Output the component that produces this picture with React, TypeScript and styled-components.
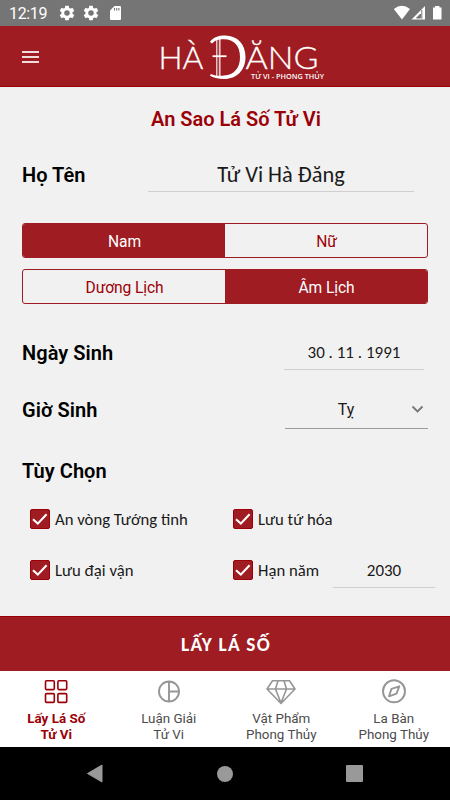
import React from 'react';
import styled, { createGlobalStyle } from 'styled-components';

const RED = '#9e1c22';
const DEEP = '#9b0007';

const GlobalStyle = createGlobalStyle`
  * { box-sizing: border-box; }
  body { margin: 0; background: #f1f1f1; font-family: Roboto, "Liberation Sans", sans-serif; }
`;

const Screen = styled.div`
  width: 450px;
  height: 800px;
  display: flex;
  flex-direction: column;
  overflow: hidden;
  background: #f1f1f1;
`;

const StatusBar = styled.div`
  height: 26px;
  flex: none;
  display: flex;
  align-items: center;
  padding: 0 8px 0 9px;
  background: #757575;
  color: #fff;
`;

const Clock = styled.span`
  width: 46px;
  font-size: 16px;
  letter-spacing: -0.35px;
  line-height: 26px;
  padding-top: 2px;
`;

const StatusIcons = styled.div<{ $right?: boolean }>`
  display: flex;
  align-items: center;
  margin-left: ${(p) => (p.$right ? 'auto' : '0')};
  svg { display: block; }
`;

const Header = styled.header`
  height: 61px;
  flex: none;
  display: flex;
  align-items: center;
  background: ${RED};
  border-bottom: 1px solid ${DEEP};
`;

const MenuButton = styled.button`
  width: 17px;
  height: 12px;
  margin: 1px 0 0 22px;
  padding: 0;
  border: 0;
  background: none;
  display: flex;
  flex-direction: column;
  justify-content: space-between;
`;

const MenuLine = styled.span`
  height: 2px;
  background: #f0dcdd;
`;

const Logo = styled.svg`
  display: block;
  margin-left: 111px;
`;

const Form = styled.main`
  height: 529px;
  flex: none;
  display: flex;
  flex-direction: column;
  padding: 0 22px;
`;

const Title = styled.h1`
  margin: 18px 0 0 22px;
  text-align: center;
  font-size: 20px;
  line-height: 28px;
  font-weight: 600;
  color: ${DEEP};
`;

const Row = styled.div<{ $top: number }>`
  height: 36px;
  flex: none;
  margin-top: ${(p) => p.$top}px;
  display: flex;
  align-items: center;
  justify-content: space-between;
`;

const Label = styled.h2<{ $drop?: boolean }>`
  margin: 0;
  padding-top: ${(p) => (p.$drop ? 2 : 0)}px;
  font-size: 20px;
  line-height: 28px;
  font-weight: 600;
  letter-spacing: 0.05px;
  color: #000;
`;

const Field = styled.div<{ $width: number; $right?: number; $size?: number; $line?: string }>`
  width: ${(p) => p.$width}px;
  height: 36px;
  flex: none;
  margin-right: ${(p) => p.$right ?? 0}px;
  padding-top: 2px;
  border-bottom: 1px solid ${(p) => p.$line ?? '#cfcfcf'};
  display: flex;
  align-items: center;
  justify-content: center;
  font-family: Carlito, Lato, Roboto, sans-serif;
  font-size: ${(p) => p.$size ?? 17}px;
  color: #1a1a1a;
`;

const SelectField = styled(Field)`
  height: 37px;
  padding-top: 0;
  font-family: Roboto, sans-serif;
  font-size: 16px;
  display: grid;
  grid-template-columns: 1fr 21px;
  text-align: center;
  svg { display: block; }
`;

const Segmented = styled.div<{ $top: number }>`
  width: 406px;
  height: 35px;
  flex: none;
  margin-top: ${(p) => p.$top}px;
  display: grid;
  grid-template-columns: 1fr 1fr;
  border: 1px solid ${RED};
  border-radius: 3px;
  overflow: hidden;
`;

const Segment = styled.button<{ $active?: boolean }>`
  border: 0;
  padding: 2px 0 0 1px;
  font-family: Roboto, sans-serif;
  font-size: 15.6px;
  letter-spacing: -0.1px;
  color: ${(p) => (p.$active ? '#fff' : DEEP)};
  background: ${(p) => (p.$active ? RED : 'transparent')};
`;

const Options = styled.div`
  margin: 13px -22px 0 8px;
  display: grid;
  grid-template-columns: 203px 1fr;
  grid-template-rows: 36px 36px;
  row-gap: 15px;
`;

const Option = styled.div`
  display: flex;
  align-items: center;
  white-space: nowrap;
  font-family: Carlito, Lato, Roboto, sans-serif;
  font-size: 16.7px;
  color: #1a1a1a;
`;

const CheckBox = styled.span`
  width: 20px;
  height: 20px;
  margin-right: 5px;
  border-radius: 2px;
  background: ${RED};
  border: 1px solid ${DEEP};
  flex: none;
  svg { display: block; }
`;

const OptionText = styled.span<{ $width?: number }>`
  width: ${(p) => (p.$width ? `${p.$width}px` : 'auto')};
`;

const Submit = styled.button`
  height: 55px;
  flex: none;
  border: 0;
  padding: 1px 0 0 2px;
  border-top: 1px solid ${DEEP};
  background: ${RED};
  color: #fff;
  font-family: Carlito, Lato, Roboto, sans-serif;
  font-size: 19.3px;
  font-weight: 700;
  letter-spacing: 1.2px;
`;

const Tabs = styled.nav`
  height: 76px;
  flex: none;
  display: grid;
  grid-template-columns: repeat(4, 1fr);
  background: #fff;
`;

const Tab = styled.div<{ $active?: boolean }>`
  display: flex;
  flex-direction: column;
  align-items: center;
  text-align: center;
  padding-top: 5px;
  font-size: 13.4px;
  line-height: 16px;
  font-weight: ${(p) => (p.$active ? 700 : 400)};
  color: ${(p) => (p.$active ? DEEP : '#4c4c4c')};
  svg { display: block; margin-bottom: 4px; flex: none; }
`;

const SystemNav = styled.div`
  height: 53px;
  flex: none;
  background: #000;
  display: flex;
  justify-content: center;
  align-items: center;
  gap: 113px;
  svg { display: block; }
`;

const Gear = () => (
  <svg width="24" height="16" viewBox="-5 0 34 24">
    <path
      fill="#fff"
      transform="translate(-1.8 -1.8) scale(1.15)"
      d="M19.14 12.94c.04-.3.06-.61.06-.94s-.02-.64-.07-.94l2.03-1.58a.5.5 0 0 0 .12-.61l-1.92-3.32a.49.49 0 0 0-.59-.22l-2.39.96a7 7 0 0 0-1.62-.94l-.36-2.54A.48.48 0 0 0 13.92 2.4h-3.84a.47.47 0 0 0-.47.41l-.36 2.54c-.59.24-1.13.57-1.62.94l-2.39-.96a.47.47 0 0 0-.59.22L2.74 8.87a.47.47 0 0 0 .12.61l2.03 1.58a6 6 0 0 0-.02 1.88l-2.03 1.58a.5.5 0 0 0-.12.61l1.92 3.32c.12.22.37.29.59.22l2.39-.96c.5.38 1.03.7 1.62.94l.36 2.54c.05.24.24.41.48.41h3.84c.24 0 .44-.17.47-.41l.36-2.54a6.7 6.7 0 0 0 1.62-.94l2.39.96c.22.08.47 0 .59-.22l1.92-3.32a.47.47 0 0 0-.12-.61zM12 15.6a3.6 3.6 0 1 1 0-7.2 3.6 3.6 0 0 1 0 7.2z"
    />
  </svg>
);

const Check = () => (
  <svg width="18" height="18" viewBox="0 0 18 18">
    <path d="M2 9.3 L6.8 13.6 L15.6 4.2" fill="none" stroke="#fff" strokeWidth="2.1" />
  </svg>
);

const BrandLogo = () => (
  <Logo width="180" height="60" viewBox="150 26 180 60">
    <g fill="#fff" fontFamily="Lato, Carlito, sans-serif">
      <g stroke="#fff" strokeWidth="0.3" fontSize="32" fontWeight="300">
        <text x="158.500" y="69" textLength="45" lengthAdjust="spacingAndGlyphs">HÀ</text>
        <text x="245.500" y="69" textLength="73" lengthAdjust="spacingAndGlyphs">ĂNG</text>
      </g>
      <text x="251" y="79" fontSize="7.800" fontFamily="Open Sans" fontWeight="600" textLength="73" lengthAdjust="spacingAndGlyphs">TỬ VI - PHONG THỦY</text>
    </g>
    <path fill="#fff" d="M210 42 C213 37 219 35.500 225 35.500 C238 35.700 245.500 44.500 245.500 57 C245.500 70 237 79 224 79 C218 79 213 77.500 210 75.800 L210.800 74 C215 76 220 76 224 75.600 C234.500 74.800 240 68 240 57 C240 46 234 39.300 224 39.300 C218 39.300 215 40.500 212 43.500 Z" />
    <path fill="none" stroke="#fff" strokeWidth="1.2" strokeOpacity="0.9" d="M216.800 40V76" />
    <path fill="none" stroke="#fff" strokeWidth="1.8" strokeOpacity="0.75" d="M219.700 39V76" />
    <path fill="none" stroke="#fff" strokeWidth="1.8" d="M212.500 56.200H226.500" />
  </Logo>
);

const tabs = [
  {
    lines: ['Lấy Lá Số', 'Tử Vi'],
    active: true,
    icon: (
      <g stroke={DEEP} strokeWidth="1.6" fill="none">
        <rect x="5.500" y="4.800" width="8.800" height="8.800" rx="1" />
        <rect x="17.900" y="4.800" width="8.800" height="8.800" rx="1" />
        <rect x="5.500" y="17.600" width="8.800" height="8.800" rx="1" />
        <rect x="17.900" y="17.600" width="8.800" height="8.800" rx="1" />
      </g>
    ),
  },
  {
    lines: ['Luận Giải', 'Tử Vi'],
    icon: (
      <g stroke="#969696" strokeWidth="1.9" fill="none">
        <circle cx="16" cy="15.500" r="10" />
        <path d="M16 5.500V25.500M16 15.500H26" />
      </g>
    ),
  },
  {
    lines: ['Vật Phẩm', 'Phong Thủy'],
    icon: (
      <g stroke="#969696" strokeWidth="1.6" fill="none" strokeLinejoin="round">
        <path d="M7.500 4.800H24.500L30 13L16 27.500L2 13Z M2 13H30M13 4.800L10.500 13L16 27L21.500 13L19 4.800" />
      </g>
    ),
  },
  {
    lines: ['La Bàn', 'Phong Thủy'],
    icon: (
      <g stroke="#969696" strokeWidth="1.9" fill="none" strokeLinejoin="round">
        <circle cx="16" cy="15.300" r="11" />
        <path d="M21.300 10.300L18.500 17.700L11 20.300L13.500 12.800Z" />
      </g>
    ),
  },
];

export default function App() {
  return (
    <>
      <GlobalStyle />
      <Screen>
        <StatusBar>
          <Clock>12:19</Clock>
          <StatusIcons>
            <Gear />
            <Gear />
            <svg width="20" height="16" viewBox="-5 0 20 16">
              <path d="M6.500 1H12a1 1 0 0 1 1 1V14a1 1 0 0 1-1 1H3a1 1 0 0 1-1-1V5.500Z" fill="#fff" />
              <path d="M6.500 3V5.500M8.700 3V5.500M10.900 3V5.500" stroke="#757575" strokeWidth="1.100" />
            </svg>
          </StatusIcons>
          <StatusIcons $right>
            <svg width="50" height="16" viewBox="392 5 50 16">
              <path d="M393.800 9 Q402 2.500 410 9 L402 19.500Z" fill="#fff" />
              <path d="M411.500 19.500L425 6V19.500Z" fill="#fff" />
              <path d="M421.800 10L421.800 18.800M416.500 18L420.500 14V18Z" fill="#757575" stroke="#757575" strokeWidth="1" />
              <path d="M433 7.500H435V6H439.500V7.500H441.500V19.500H433Z" fill="#fff" />
            </svg>
          </StatusIcons>
        </StatusBar>
        <Header>
          <MenuButton aria-label="Menu">
            <MenuLine />
            <MenuLine />
            <MenuLine />
          </MenuButton>
          <BrandLogo />
        </Header>
        <Form>
          <Title>An Sao Lá Số Tử Vi</Title>
          <Row $top={23}>
            <Label $drop>Họ Tên</Label>
            <Field $width={266} $right={14} $size={22.4}>Tử Vi Hà Đăng</Field>
          </Row>
          <Segmented $top={31}>
            <Segment $active>Nam</Segment>
            <Segment>Nữ</Segment>
          </Segmented>
          <Segmented $top={11}>
            <Segment>Dương Lịch</Segment>
            <Segment $active>Âm Lịch</Segment>
          </Segmented>
          <Row $top={30}>
            <Label $drop>Ngày Sinh</Label>
            <Field $width={140} $right={4}>30 . 11 . 1991</Field>
          </Row>
          <Row $top={22}>
            <Label>Giờ Sinh</Label>
            <SelectField $width={143} $line="#9c9c9c">
              <span>Tỵ</span>
              <svg width="22" height="16" viewBox="0 0 22 16">
                <path d="M5.500 4.500L10.500 9.500L15.500 4.500" fill="none" stroke="#777" strokeWidth="1.900" />
              </svg>
            </SelectField>
          </Row>
          <Row $top={24}>
            <Label $drop>Tùy Chọn</Label>
          </Row>
          <Options>
            <Option><CheckBox><Check /></CheckBox><OptionText>An vòng Tướng tinh</OptionText></Option>
            <Option><CheckBox><Check /></CheckBox><OptionText>Lưu tứ hóa</OptionText></Option>
            <Option><CheckBox><Check /></CheckBox><OptionText>Lưu đại vận</OptionText></Option>
            <Option>
              <CheckBox><Check /></CheckBox>
              <OptionText $width={75}>Hạn năm</OptionText>
              <Field $width={102}>2030</Field>
            </Option>
          </Options>
        </Form>
        <Submit>LẤY LÁ SỐ</Submit>
        <Tabs>
          {tabs.map((tab) => (
            <Tab key={tab.lines.join(' ')} $active={tab.active}>
              <svg width="32" height="31" viewBox="0 0 32 31">{tab.icon}</svg>
              {tab.lines.map((line) => <span key={line}>{line}</span>)}
            </Tab>
          ))}
        </Tabs>
        <SystemNav>
          <svg width="17" height="19" viewBox="1 0 17 19"><path d="M16 1V18L1.500 9.500Z" fill="#999" stroke="#999" strokeLinejoin="round" /></svg>
          <svg width="16" height="16" viewBox="0 0 16 16"><circle cx="8" cy="8" r="8" fill="#999" /></svg>
          <svg width="17" height="17" viewBox="0 0 17 17"><rect width="17" height="17" rx="1" fill="#999" /></svg>
        </SystemNav>
      </Screen>
    </>
  );
}
